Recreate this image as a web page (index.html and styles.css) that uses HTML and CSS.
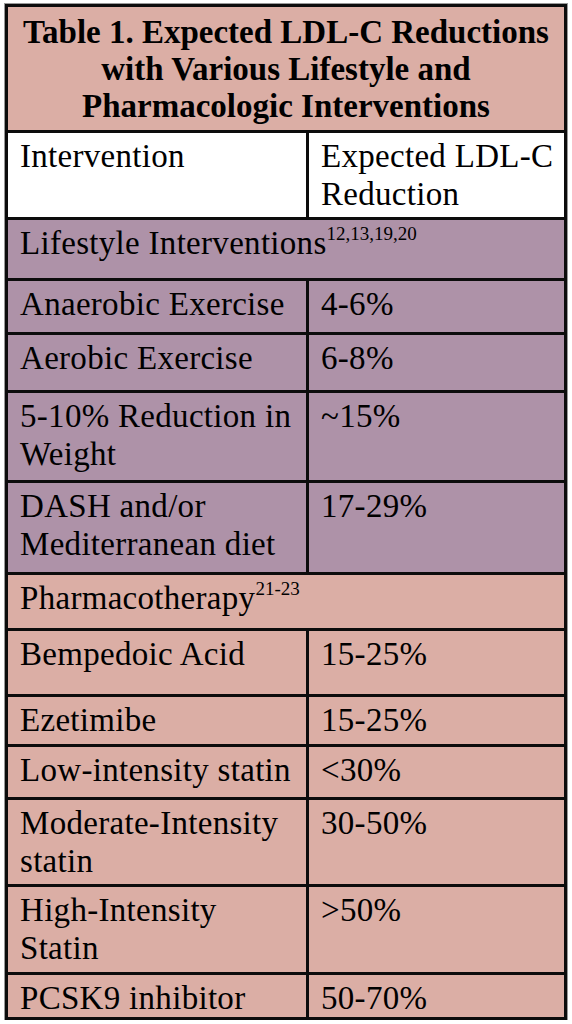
FILE: index.html
```html
<!DOCTYPE html>
<html lang="en">
<head>
    <meta charset="UTF-8">
    <meta name="viewport" content="width=device-width, initial-scale=1.0">
    <title>Table 1. Expected LDL-C Reductions</title>
    <link rel="stylesheet" href="styles.css">
</head>
<body>
    <table class="ldl-table">
        <colgroup>
            <col class="col-intervention">
            <col class="col-reduction">
        </colgroup>
        <thead>
            <tr class="title-row">
                <th colspan="2">Table 1. Expected LDL-C Reductions with Various Lifestyle and Pharmacologic Interventions</th>
            </tr>
            <tr class="head-row">
                <td>Intervention</td>
                <td>Expected LDL-C<br>Reduction</td>
            </tr>
        </thead>
        <tbody class="lifestyle">
            <tr class="section-row">
                <td colspan="2">Lifestyle Interventions<sup>12,13,19,20</sup></td>
            </tr>
            <tr class="r-anaerobic">
                <td>Anaerobic Exercise</td>
                <td>4-6%</td>
            </tr>
            <tr class="r-aerobic">
                <td>Aerobic Exercise</td>
                <td>6-8%</td>
            </tr>
            <tr class="r-weight">
                <td>5-10% Reduction in<br>Weight</td>
                <td>~15%</td>
            </tr>
            <tr class="r-dash">
                <td>DASH and/or<br>Mediterranean diet</td>
                <td>17-29%</td>
            </tr>
        </tbody>
        <tbody class="pharma">
            <tr class="section-row r-pharma">
                <td colspan="2">Pharmacotherapy<sup>21-23</sup></td>
            </tr>
            <tr class="r-bempedoic">
                <td>Bempedoic Acid</td>
                <td>15-25%</td>
            </tr>
            <tr class="r-ezetimibe">
                <td>Ezetimibe</td>
                <td>15-25%</td>
            </tr>
            <tr class="r-low">
                <td>Low-intensity statin</td>
                <td>&lt;30%</td>
            </tr>
            <tr class="r-moderate">
                <td>Moderate-Intensity<br>statin</td>
                <td>30-50%</td>
            </tr>
            <tr class="r-high">
                <td>High-Intensity<br>Statin</td>
                <td>&gt;50%</td>
            </tr>
            <tr class="r-pcsk9">
                <td>PCSK9 inhibitor</td>
                <td>50-70%</td>
            </tr>
        </tbody>
    </table>
</body>
</html>
```

FILE: styles.css
```css
body { margin: 0; background: #ffffff; font-family: "Liberation Serif", "Times New Roman", serif; color: #000; }
.ldl-table { border-collapse: collapse; width: 562px; margin: 4px 0 0 5px; box-shadow: 0 0 0 1px #999; }
.ldl-table th, .ldl-table td { border: 3px solid #0c0c0c; padding: 4px 10px 0 12px; vertical-align: top; text-align: left; font-size: 33px; letter-spacing: 0.3px; line-height: 38px; font-weight: normal; }
.col-intervention { width: 301px; }
.ldl-table sup { font-size: 19px; letter-spacing: 0; line-height: 0; vertical-align: 14px; }

.title-row th { background-color: #dbaea5; text-align: center; font-weight: bold; font-size: 33px; letter-spacing: 0; line-height: 37px; padding: 7px 8px 0 8px; }
.head-row td { background-color: #ffffff; }
.lifestyle td { background-color: #ae92a8; }
.pharma td { background-color: #dbaea5; }

.title-row { height: 126px; }
.head-row { height: 87px; }
.section-row { height: 61px; }
.r-anaerobic { height: 54px; }
.r-aerobic { height: 58px; }
.r-weight { height: 90px; }
.r-dash { height: 92px; }
.r-pharma { height: 56px; }
.r-bempedoic { height: 66px; }
.r-ezetimibe { height: 50px; }
.r-low { height: 53px; }
.r-moderate { height: 87px; }
.r-high { height: 88px; }
.r-pcsk9 { height: 44px; }
```
